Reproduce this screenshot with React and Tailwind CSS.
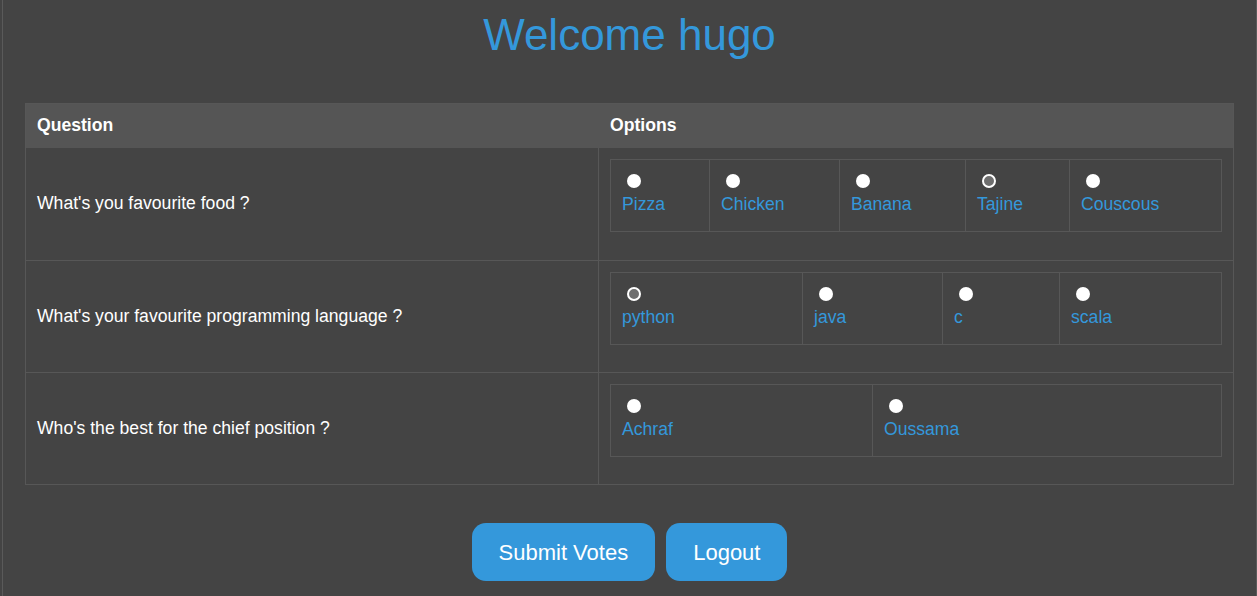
import React, { useState } from 'react';

const questions = [
    {
        text: "What's you favourite food ?",
        options: [
            { label: 'Pizza', w: 'w-[99px]' },
            { label: 'Chicken', w: 'w-[130px]' },
            { label: 'Banana', w: 'w-[126px]' },
            { label: 'Tajine', w: 'w-[104px]' },
            { label: 'Couscous', w: 'flex-1' },
        ],
        picked: 'Tajine',
    },
    {
        text: "What's your favourite programming language ?",
        options: [
            { label: 'python', w: 'w-[192px]' },
            { label: 'java', w: 'w-[140px]' },
            { label: 'c', w: 'w-[117px]' },
            { label: 'scala', w: 'flex-1' },
        ],
        picked: 'python',
    },
    {
        text: "Who's the best for the chief position ?",
        options: [
            { label: 'Achraf', w: 'w-[262px]' },
            { label: 'Oussama', w: 'flex-1' },
        ],
        picked: null,
    },
];

function Radio({ checked, onClick }) {
    return (
        <button
            type="button"
            onClick={onClick}
            className={`ml-[5px] mt-[14px] block w-[14px] h-[14px] rounded-full ${checked ? 'bg-[#6e6e6e] border-2 border-white' : 'bg-white'}`}
        />
    );
}

export default function App() {
    const [picked, setPicked] = useState(questions.map((q) => q.picked));

    const choose = (qi, label) => {
        setPicked((prev) => prev.map((p, i) => (i === qi ? label : p)));
    };

    return (
        <div className="min-h-[596px] bg-[#444444] font-['Liberation_Sans',Arial,sans-serif] text-[17.6px]">
            <div className="ml-[2px] w-[1255px] min-h-[596px] border-x border-[#5a5a5a]">
                <h1 className="pt-[2px] text-center text-[44px] leading-normal text-[#3498db]">Welcome hugo</h1>

                <div className="mt-[35px] ml-[22px] w-[1209px] border border-[#575757]">
                    <div className="flex h-[44px] items-center pb-[1px] bg-[#555555] font-bold text-white">
                        <div className="w-[573px] pl-[11px]">Question</div>
                        <div className="flex-1 pl-[11px]">Options</div>
                    </div>

                    {questions.map((q, qi) => (
                        <div key={q.text} className={`flex h-[112px] ${qi > 0 ? 'border-t border-[#575757]' : ''}`}>
                            <div className="flex w-[573px] items-center border-r border-[#575757] pl-[11px] pb-[1px] text-white">
                                {q.text}
                            </div>
                            <div className="flex-1 px-[11px] pt-[11px]">
                                <div className="flex h-[73px] border border-[#575757]">
                                    {q.options.map((o, oi) => (
                                        <div
                                            key={o.label}
                                            className={`${o.w} pl-[11px] ${oi < q.options.length - 1 ? 'border-r border-[#575757]' : ''}`}
                                        >
                                            <Radio checked={picked[qi] === o.label} onClick={() => choose(qi, o.label)} />
                                            <div className="mt-[6px] leading-[20px] text-[#3498db]">{o.label}</div>
                                        </div>
                                    ))}
                                </div>
                            </div>
                        </div>
                    ))}
                </div>

                <div className="mt-[38px] flex justify-center gap-[11px] text-[22px] text-white">
                    <button className="h-[58px] rounded-[14px] bg-[#3498db] px-[27px]">Submit Votes</button>
                    <button className="h-[58px] rounded-[14px] bg-[#3498db] px-[27px]">Logout</button>
                </div>
            </div>
        </div>
    );
}
